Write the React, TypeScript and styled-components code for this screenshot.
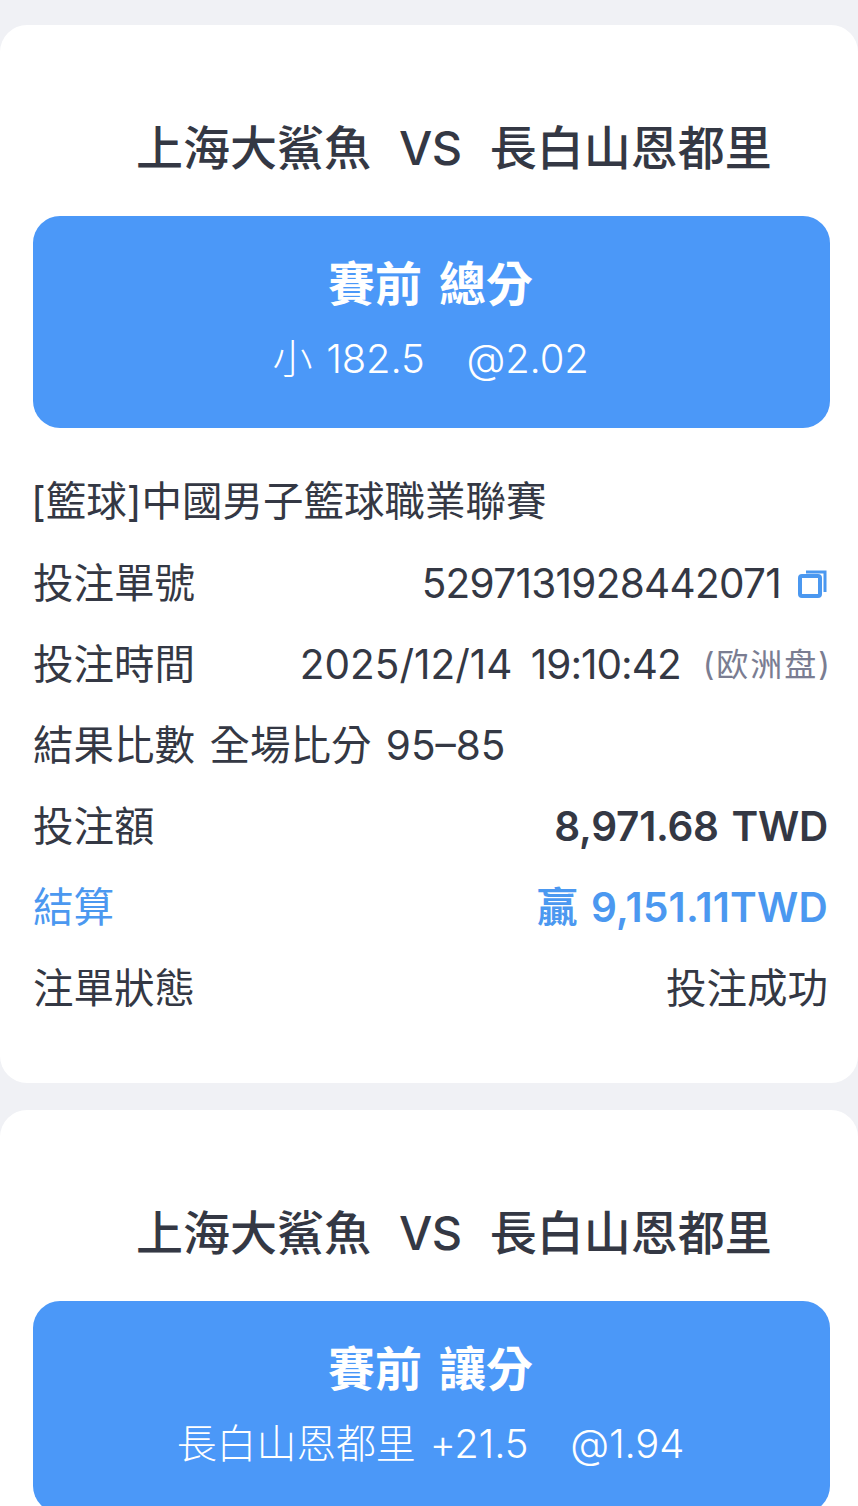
import React from 'react'
import styled, { createGlobalStyle } from 'styled-components'

const GlobalStyle = createGlobalStyle`
  html, body {
    margin: 0;
    padding: 0;
    background: #f0f1f5;
    height: 1506px;
    overflow: hidden;
  }
  body {
    font-family: Inter, "Noto Sans CJK TC", sans-serif;
    color: #343844;
  }
`

const Page = styled.div`
  display: flex;
  flex-direction: column;
  gap: 27px;
  padding-top: 25px;
  height: 1481px;
  overflow: hidden;
`

const Card = styled.section`
  flex: none;
  background: #fff;
  border-radius: 27px;
  height: 1058px;
  padding: 0 28px 0 33px;
  box-sizing: border-box;
`

const MatchTitle = styled.h2`
  margin: 0;
  padding: 88px 0 33px 103px;
  display: flex;
  gap: 28px;
  font-size: 47px;
  line-height: 70px;
  font-weight: 500;
  white-space: nowrap;
`

const Versus = styled.span`
  letter-spacing: -0.5px;
`

const BetBox = styled.div`
  width: 797px;
  height: 212px;
  background: #4b98f8;
  border-radius: 27px;
  color: #fff;
  display: flex;
  flex-direction: column;
  align-items: center;
  padding: 34px 2px 0 0;
  box-sizing: border-box;
`

const BetType = styled.div`
  font-size: 47px;
  line-height: 68px;
  font-weight: 700;
  word-spacing: 6px;
  white-space: pre;
`

const BetPick = styled.div`
  font-size: 40px;
  line-height: 56px;
  font-weight: 300;
  letter-spacing: -0.2px;
  word-spacing: 3px;
  margin-top: 13px;
  white-space: pre;
`

const League = styled.div`
  margin: 44px 0 0 -2px;
  font-size: 40.5px;
  line-height: 60px;
`

const Rows = styled.div`
  display: flex;
  flex-direction: column;
  margin-top: 11px;
  padding-right: 2px;
`

const Row = styled.div<{ $accent?: boolean }>`
  display: flex;
  justify-content: space-between;
  align-items: center;
  height: 81px;
  font-size: 40.5px;
  line-height: 60px;
  white-space: nowrap;
  word-spacing: 3px;
  color: ${p => (p.$accent ? '#4b98f0' : '#343844')};
`

const Value = styled.span<{ $strong?: boolean; $spacing?: number }>`
  display: flex;
  align-items: center;
  font-weight: ${p => (p.$strong ? 600 : 400)};
  letter-spacing: ${p => p.$spacing ?? 0}px;
`

const DateText = styled.span`
  word-spacing: 7px;
`

const ClockText = styled.span`
  letter-spacing: -1px;
`

const MarketNote = styled.span`
  font-size: 32px;
  letter-spacing: 2px;
  color: #7a7d92;
  margin: 0 -4px 0 22px;
`

const CopyIcon = styled.svg`
  width: 30px;
  height: 30px;
  margin-left: 17px;
`

const Copy = () => (
  <CopyIcon viewBox="0 0 30 30" fill="none" stroke="#4b98f0" strokeWidth="4">
    <rect x="2" y="7" width="20" height="20" rx="2" />
    <path d="M8 3h19v20" strokeWidth="3" />
  </CopyIcon>
)

function App() {
  return (
    <>
      <GlobalStyle />
      <Page>
        <Card>
          <MatchTitle>
            <span>上海大鯊魚</span>
            <Versus>VS</Versus>
            <span>長白山恩都里</span>
          </MatchTitle>
          <BetBox>
            <BetType>賽前 總分</BetType>
            <BetPick>小 182.5   @2.02</BetPick>
          </BetBox>
          <League>[籃球]中國男子籃球職業聯賽</League>
          <Rows>
            <Row>
              <span>投注單號</span>
              <Value $spacing={-0.7}>5297131928442071<Copy /></Value>
            </Row>
            <Row>
              <span>投注時間</span>
              <Value>
                <DateText>2025/12/14 <ClockText>19:10:42</ClockText></DateText>
                <MarketNote>(欧洲盘)</MarketNote>
              </Value>
            </Row>
            <Row>
              <span>結果比數 全場比分 95–85</span>
            </Row>
            <Row>
              <span>投注額</span>
              <Value $strong $spacing={-0.3}>8,971.68 TWD</Value>
            </Row>
            <Row $accent>
              <span>結算</span>
              <Value $strong $spacing={0.2}>贏 9,151.11TWD</Value>
            </Row>
            <Row>
              <span>注單狀態</span>
              <Value>投注成功</Value>
            </Row>
          </Rows>
        </Card>
        <Card>
          <MatchTitle>
            <span>上海大鯊魚</span>
            <Versus>VS</Versus>
            <span>長白山恩都里</span>
          </MatchTitle>
          <BetBox>
            <BetType>賽前 讓分</BetType>
            <BetPick>長白山恩都里 +21.5   @1.94</BetPick>
          </BetBox>
        </Card>
      </Page>
    </>
  )
}

export default App
